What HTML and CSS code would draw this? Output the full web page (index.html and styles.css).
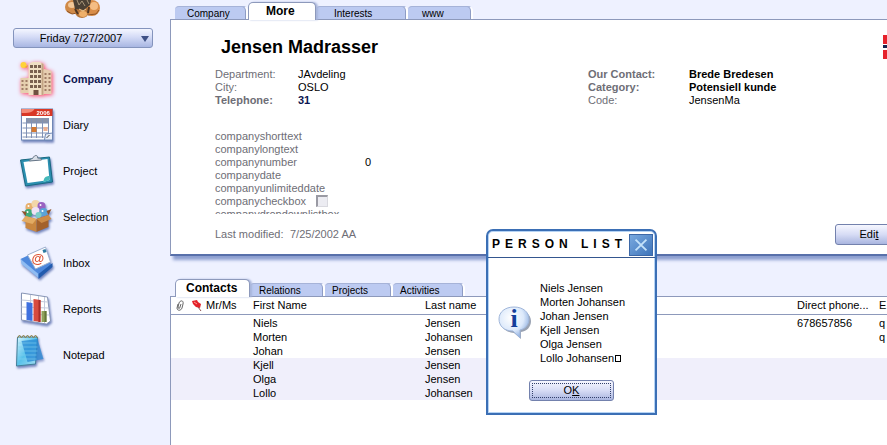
FILE: index.html
```
<!DOCTYPE html>
<html lang="en">
<head>
<meta charset="utf-8">
<title>Jensen Madrasser</title>
<link rel="stylesheet" href="styles.css">
</head>
<body>
<div class="app">
  <aside class="sidebar">
    <svg class="logo" viewBox="0 0 38 18" width="38" height="18" aria-hidden="true">
      <ellipse cx="8" cy="7" rx="7" ry="7" fill="#d08a48"/>
      <ellipse cx="28" cy="8" rx="8" ry="8" fill="#d98d48"/>
      <ellipse cx="8" cy="5" rx="4" ry="3" fill="#f2c898"/>
      <ellipse cx="30" cy="6" rx="4" ry="4" fill="#f5bd84"/>
      <path d="M3 11l5 3 5-1M24 15l8-1 3-4" stroke="#8f5526" stroke-width="1" fill="none"/>
      <ellipse cx="18" cy="12" rx="7" ry="6" fill="#b9773a"/>
      <ellipse cx="19" cy="14" rx="4" ry="3" fill="#efb06a"/>
      <path d="M9 0h18l-1 5-6 5-9-1z" fill="#4a4034"/>
      <path d="M13 0l2 5 3-4 3 5M23 0l2 4" fill="none" stroke="#a89678" stroke-width="1"/>
      <path d="M11 9l3 5M25 7l-1 6" stroke="#503622" stroke-width="2"/>
      <path d="M15 9l4 2 3-2" fill="none" stroke="#e9c690" stroke-width="1"/>
    </svg>
    <label class="date">
      <select class="date-select" aria-label="Date"><option>Friday 7/27/2007</option></select>
    </label>
    <nav class="nav">
      <a class="nav-item active" href="#company">
        <svg class="icon glow" viewBox="0 0 36 36" aria-hidden="true">
          <circle cx="5" cy="4" r="3" fill="#ffd338"/><path d="M6 6l4-2-2 3z" fill="#f0a830"/>
          <path d="M2 17h9v15H2z" fill="#e5cfae"/><path d="M23 10l3-2 7 2v23H23z" fill="#e6cdb0"/>
          <path d="M10 3l4-2h7l4 2v31H10z" fill="#f0dfc4"/><path d="M23 2l2 1v31h-2z" fill="#c3a484"/>
          <g stroke="#7a6050" stroke-width="3" stroke-dasharray="3 2" fill="none">
            <path d="M13 4v24M17 4v24M21 4v24"/></g>
          <g stroke="#a07c66" stroke-width="2" stroke-dasharray="2 2" fill="none">
            <path d="M4 19v11M8 19v11M27 12v18M31 12v18"/></g>
          <path d="M15 29h5v5h-5z" fill="#705040"/>
        </svg><span>Company</span></a>
      <a class="nav-item" href="#diary">
        <svg class="icon" viewBox="0 0 36 36" aria-hidden="true">
          <rect x="3" y="2" width="31" height="31" fill="#fff" stroke="#6f87b5"/>
          <path d="M3 2h31v7H3z" fill="#d93726"/><path d="M3 2h13c-2 4-7 4-13 4z" fill="#f48a78"/>
          <text x="18" y="8" class="year">2006</text>
          <path d="M8 11h22v5H8z" fill="#8b94a9"/>
          <path d="M4 16h26M4 21h26M4 26h26M8 11v20M13 11v20M18 11v20M24 11v20M30 11v18M4 30h22" stroke="#8192b5" fill="none"/>
          <rect x="13" y="20" width="5" height="5" fill="#d5782f"/><rect x="25" y="20" width="4" height="4" fill="#eeb090"/>
          <path d="M26 33l1-6 7-1v7z" fill="#e9eef8" stroke="#6f87b5"/><path d="M28 31l3-3" stroke="#444"/>
        </svg><span>Diary</span></a>
      <a class="nav-item" href="#project">
        <svg class="icon" viewBox="0 0 36 36" aria-hidden="true">
          <path d="M2 7l29-3 3 25-27 4z" fill="#2b8fb0" stroke="#196880"/>
          <path d="M5 9l24-3 2 21-22 3z" fill="#fff"/>
          <path d="M31 27l-5-1-1 3z" fill="#9fe3df"/><path d="M25 29c0-4 2-6 6-6v4z" fill="#44b9ba"/>
          <path d="M11 8c0-3 3-1 4-4 2-3 5-1 4 1 3 0 4 1 4 2z" fill="#d8dee7" stroke="#697687"/>
        </svg><span>Project</span></a>
      <a class="nav-item" href="#selection">
        <svg class="icon" viewBox="0 0 36 36" aria-hidden="true">
          <circle cx="11" cy="8" r="4" fill="#e8b06c"/><circle cx="17" cy="5" r="4" fill="#f3d7a9"/>
          <circle cx="23" cy="7" r="4" fill="#9a62c2"/><circle cx="10" cy="14" r="4" fill="#40aa7a"/>
          <circle cx="17" cy="12" r="4" fill="#efe3f6"/><circle cx="25" cy="13" r="4" fill="#5aa4d8"/>
          <circle cx="20" cy="16" r="3" fill="#7ccfc7"/>
          <g fill="#fff"><circle cx="10" cy="7" r="1"/><circle cx="22" cy="6" r="1"/><circle cx="9" cy="13" r="1"/><circle cx="24" cy="12" r="1"/></g>
          <path d="M7 17l11 3v13L7 29z" fill="#c9873f"/><path d="M18 20l12-4v12l-12 5z" fill="#a3612b"/>
          <path d="M7 17l-4 5 11 3 4-5z" fill="#e2ab63"/><path d="M18 20l5 4 10-4-3-4z" fill="#cc8b46"/>
          <path d="M7 17l-4-5 5 1zM30 16l3-6-5 2z" fill="#8f532a"/>
        </svg><span>Selection</span></a>
      <a class="nav-item" href="#inbox">
        <svg class="icon" viewBox="0 0 36 36" aria-hidden="true">
          <path d="M2 14l15-7 17 13-14 13z" fill="#4d88dc"/><path d="M2 14l18 15v4L3 19z" fill="#8fbcf2"/>
          <path d="M20 29l14-11v4L20 34z" fill="#235cae"/>
          <path d="M9 10L27 2l5 15-15 7z" fill="#fff" stroke="#9db0cf"/>
          <path d="M24 5l3-1 1 3-3 1z" fill="#2c7aa0"/>
          <text x="13" y="18" class="at">@</text>
        </svg><span>Inbox</span></a>
      <a class="nav-item" href="#reports">
        <svg class="icon" viewBox="0 0 36 36" aria-hidden="true">
          <path d="M3 2l26 4 3 24-4 3L3 29z" fill="#fff" stroke="#8795b5"/>
          <path d="M3 9l26 2M3 16l27 1M3 23l28 1M12 4v26M20 5v26M26 6v26" stroke="#c3cadb" fill="none"/>
          <path d="M8 11l6 1v18l-6-1z" fill="#3f71df"/><path d="M15 8l7 1v22l-7-1z" fill="#d74b3f"/>
          <path d="M20 9l2 0v22l-2 0z" fill="#a92c29"/><path d="M23 20l5 0v11h-5z" fill="#91a35c"/><path d="M26 20h2v11h-2z" fill="#637638"/>
        </svg><span>Reports</span></a>
      <a class="nav-item" href="#notepad">
        <svg class="icon notepad" viewBox="0 0 36 36" aria-hidden="true">
          <defs><linearGradient id="note" x2="1" y2="1"><stop stop-color="#d8f6ff"/><stop offset=".5" stop-color="#58c2ea"/><stop offset="1" stop-color="#a8def2"/></linearGradient></defs>
          <path d="M4 4h20l-2 27-19 2z" fill="url(#note)" stroke="#427f99"/>
          <path d="M8 8l16-2 6 20-16 3z" fill="#2788d4" opacity=".75"/>
          <path d="M5 10h18M5 14h19M5 18h19M5 22h18M5 26h18" stroke="#83d0ec" fill="none" opacity=".6"/>
          <path d="M4 5l2-3 2 3 2-3 2 3 2-3 2 3 2-3 2 3 2-3 2 3" stroke="#94864f" fill="none"/>
        </svg><span>Notepad</span></a>
    </nav>
  </aside>

  <main class="main">
    <div class="tabs" role="tablist" aria-label="Company views">
      <button class="tab" role="tab">Company</button>
      <button class="tab selected more" role="tab" aria-selected="true">More</button>
      <button class="tab interests" role="tab">Interests</button>
      <button class="tab www" role="tab">www</button>
    </div>
    <section class="card">
      <div class="card-inner">
        <header class="card-head">
          <h1>Jensen Madrasser</h1>
          <svg class="flag" viewBox="0 0 32 24" role="img" aria-label="Norway">
            <path d="M0 0h32v24H0z" fill="#e6212b"/><path d="M9 0h6v24H9zM0 9h32v6H0z" fill="#fff"/><path d="M11 0h3v24h-3zM0 10h32v3H0z" fill="#17234f"/>
          </svg>
        </header>
        <div class="details">
          <dl class="facts">
            <dt>Department:</dt><dd>JAvdeling</dd>
            <dt>City:</dt><dd>OSLO</dd>
            <dt class="strong">Telephone:</dt><dd class="strong phone">31</dd>
          </dl>
          <dl class="facts wide">
            <dt class="strong">Our Contact:</dt><dd class="strong">Brede Bredesen</dd>
            <dt class="strong">Category:</dt><dd class="strong">Potensiell kunde</dd>
            <dt>Code:</dt><dd>JensenMa</dd>
          </dl>
        </div>
        <div class="custom">
          <div>companyshorttext</div>
          <div>companylongtext</div>
          <div class="pair"><span>companynumber</span><span class="number">0</span></div>
          <div>companydate</div>
          <div>companyunlimiteddate</div>
          <div class="check-row"><label for="cb">companycheckbox</label><input id="cb" type="checkbox"></div>
          <div>companydropdownlistbox</div>
        </div>
        <footer class="card-foot">
          <span class="modified">Last modified:</span><span>7/25/2002 AA</span>
          <button class="btn edit">Edi<u>t</u></button>
        </footer>
      </div>
    </section>

    <div class="tabs lower" role="tablist" aria-label="Company lists">
      <button class="tab selected contacts" role="tab" aria-selected="true">Contacts</button>
      <button class="tab relations" role="tab">Relations</button>
      <button class="tab projects" role="tab">Projects</button>
      <button class="tab activities" role="tab">Activities</button>
    </div>
    <section class="list">
      <table class="people">
        <colgroup><col class="c-clip"><col class="c-pin"><col class="c-title"><col class="c-first"><col><col class="c-phone"><col class="c-mail"></colgroup>
        <thead>
          <tr>
            <th><svg class="clip" viewBox="0 0 10 12" aria-label="Attachment"><path d="M3 4l-1 4c0 3 4 3 5 0l1-4c1-4-3-4-4-1L3 7c0 2 2 2 2 0l1-3" fill="none" stroke="#666"/></svg></th>
            <th><svg class="pin" viewBox="0 0 10 11" aria-label="Pinned"><path d="M0 1l5-1 1 2 3 2-1 4-4-1-3-3z" fill="#e3222a"/><path d="M2 2l3 2" stroke="#ff9a90"/><path d="M6 7l3 4" stroke="#8c5050"/></svg></th>
            <th>Mr/Ms</th><th>First Name</th><th>Last name</th><th>Direct phone...</th><th>E</th>
          </tr>
        </thead>
        <tbody>
          <tr><td></td><td></td><td></td><td>Niels</td><td>Jensen</td><td>678657856</td><td>q</td></tr>
          <tr><td></td><td></td><td></td><td>Morten</td><td>Johansen</td><td></td><td>q</td></tr>
          <tr><td></td><td></td><td></td><td>Johan</td><td>Jensen</td><td></td><td></td></tr>
          <tr class="shade"><td></td><td></td><td></td><td>Kjell</td><td>Jensen</td><td></td><td></td></tr>
          <tr class="shade"><td></td><td></td><td></td><td>Olga</td><td>Jensen</td><td></td><td></td></tr>
          <tr class="shade"><td></td><td></td><td></td><td>Lollo</td><td>Johansen</td><td></td><td></td></tr>
        </tbody>
      </table>
    </section>
  </main>
</div>

<div class="dialog" role="dialog" aria-labelledby="dlg-title">
  <div class="dialog-title">
    <h2 id="dlg-title">PERSON LIST</h2>
    <button class="close" aria-label="Close"><svg viewBox="0 0 24 22" aria-hidden="true"><path d="M6 5l12 12M18 5L6 17" stroke="#c4e2fa" stroke-width="2"/></svg></button>
  </div>
  <div class="dialog-body">
    <svg class="info" viewBox="0 0 34 34" aria-hidden="true">
      <defs><radialGradient id="bubble" cx=".4" cy=".35" r=".7"><stop stop-color="#fff"/><stop offset=".6" stop-color="#dce9fb"/><stop offset="1" stop-color="#86a8dc"/></radialGradient></defs>
      <path d="M17 3c9 0 16 5 16 12 0 6-4 10-10 11v7l-7-6C7 26 2 21 2 14 2 7 8 3 17 3z" fill="#55647e" opacity=".6"/>
      <path d="M16 1c9 0 15 5 15 12 0 6-4 10-9 11v8l-7-7C6 25 1 20 1 13 1 6 7 1 16 1z" fill="url(#bubble)" stroke="#a0b6da"/>
      <text x="16" y="21" class="i">i</text>
    </svg>
    <ul class="names">
      <li>Niels Jensen</li><li>Morten Johansen</li><li>Johan Jensen</li><li>Kjell Jensen</li><li>Olga Jensen</li><li>Lollo Johansen<span class="box"></span></li>
    </ul>
  </div>
  <button class="btn ok"><span>O<u>K</u></span></button>
</div>
</body>
</html>
```
FILE: styles.css
```
* { box-sizing: border-box; }
body {
  margin: 0;
  overflow: hidden;
  background: #eef1ff;
  color: #000;
  font: 11px/13px "Liberation Sans", Arial, sans-serif;
}
button, select { font: inherit; color: inherit; }
h1, h2, dl, dd, ul { margin: 0; padding: 0; }

.app {
  display: grid;
  grid-template-columns: 170px minmax(0, 1fr);
  min-height: 100vh;
}

/* Sidebar */
.sidebar { padding: 0 17px 0 13px; }
.logo { display: block; margin: 0 auto 10px 51px; }
.date { display: block; position: relative; }
.date::after {
  content: "";
  position: absolute;
  right: 4px;
  top: 8px;
  border: 4px solid transparent;
  border-top: 6px solid #3f5186;
  border-bottom: 0;
  pointer-events: none;
}
.date-select {
  display: block;
  width: 100%;
  height: 20px;
  padding: 0 4px 0 0;
  appearance: none;
  border: 1px solid #8494bd;
  border-radius: 3px;
  background: linear-gradient(#f4f6ff, #d4dbf6 45%, #a8b6e2);
  text-align-last: center;
}
.nav { margin-top: 8px; }
.nav-item {
  display: flex;
  align-items: center;
  gap: 8px;
  height: 46px;
  padding-left: 5px;
  color: #000;
  text-decoration: none;
}
.nav-item.active { color: #0b1450; font-weight: bold; }
.icon { width: 37px; height: 36px; filter: drop-shadow(1px 2px 1px #7284bc); }
.icon.glow { filter: drop-shadow(1px 1px 2px #ff4060); }
.notepad { margin: -8px 5px 0 -5px; }
.year { font: bold 6px "Liberation Sans", sans-serif; fill: #fff; }
.at { font: bold 13px "Liberation Sans", sans-serif; fill: #dc5535; }

/* Tabs */
.main { display: flex; flex-direction: column; overflow: hidden; }
.tabs { display: flex; align-items: flex-end; height: 19px; padding-left: 5px; }
.tab {
  height: 13px;
  width: 73px;
  padding: 0 0 0 12px;
  border: 0;
  border-top: 1px solid #a6b3d8;
  border-right: 2px solid #fff;
  border-radius: 4px 5px 0 0;
  background: #bccaf1;
  box-shadow: inset -1px 0 #8e9cc4;
  font-size: 10px;
  line-height: 13px;
  text-align: left;
}
.tab.selected {
  position: relative;
  z-index: 1;
  height: 18px;
  margin-bottom: -1px;
  border: 1px solid #8d99bb;
  border-bottom: 0;
  border-radius: 5px 5px 0 0;
  background: #fff;
  box-shadow: 2px 0 2px #a9b6db;
  font-size: 12px;
  font-weight: bold;
  line-height: 17px;
}
.more { width: 68px; padding-left: 17px; }
.interests { width: 92px; padding-left: 18px; }
.www { width: 65px; padding-left: 14px; }
.contacts { width: 75px; padding-left: 10px; }
.relations { width: 75px; padding-left: 9px; }
.projects { width: 68px; padding-left: 7px; }
.activities { width: 72px; padding-left: 7px; }
.lower { height: 18px; margin-top: 22px; }

/* Company card */
.card {
  border: 1px solid #8d99bb;
  border-right: 0;
  border-bottom: 2px solid #5870aa;
  background: #fff;
  box-shadow: 3px 4px 3px #8d9fd0;
}
.card-inner { width: calc(100% + 30px); padding: 15px 0 9px 44px; }
.card-head { display: flex; justify-content: space-between; align-items: center; height: 24px; padding: 0 2px 0 6px; }
.card-head h1 { font-size: 18px; line-height: 22px; }
.flag { width: 32px; height: 24px; }
.details { display: grid; grid-template-columns: 373px 1fr; margin-top: 9px; }
.facts { display: grid; grid-template-columns: 83px 1fr; align-content: start; }
.facts.wide { grid-template-columns: 101px 1fr; }
dt, .custom, .card-foot { color: #6e6e76; }
.strong { font-weight: bold; }
.phone { color: #0b1450; }
.custom { height: 84px; margin-top: 23px; overflow: hidden; }
.pair { display: grid; grid-template-columns: 150px 1fr; }
.number { color: #000; }
.check-row { display: flex; gap: 10px; height: 13px; }
.check-row input {
  width: 12px;
  height: 12px;
  margin: 0;
  appearance: none;
  border: 1px solid #d9d9df;
  border-top: 2px solid #9a9aa3;
  border-left: 2px solid #9a9aa3;
  background: #ececf2;
}
.card-foot { display: flex; align-items: center; margin-top: 10px; }
.modified { width: 75px; }
.btn {
  height: 21px;
  padding: 0;
  border: 1px solid #7381ad;
  border-radius: 3px;
  background: linear-gradient(#f6f7ff, #d7dcf5 50%, #a9b5df);
  color: #000;
}
.edit { width: 68px; margin-left: auto; margin-right: 14px; }

/* Contact list */
.list { flex: 1; border-top: 1px solid #8d99bb; border-left: 1px solid #8d99bb; background: #fff; }
.people { width: calc(100% + 51px); table-layout: fixed; border-collapse: separate; border-spacing: 0; }
.people th {
  height: 18px;
  padding: 0 0 0 1px;
  border-bottom: 1px solid #8d99bb;
  font-weight: normal;
  text-align: left;
  white-space: nowrap;
}
.people td { height: 14px; padding: 0 0 0 1px; }
.people tbody::before { content: ""; display: block; height: 1px; }
.shade { background: #f0effb; }
.c-clip { width: 20px; }
.c-pin { width: 14px; }
.c-title { width: 47px; }
.c-first { width: 172px; }
.c-phone { width: 82px; }
.c-mail { width: 60px; }
.clip { display: block; width: 10px; height: 12px; margin-left: 3px; }
.pin { display: block; width: 10px; height: 11px; }

/* Message box */
.dialog {
  position: absolute;
  left: 486px;
  top: 229px;
  width: 171px;
  padding-bottom: 12px;
  border: 2px solid #3b6fb5;
  border-radius: 7px 7px 0 0;
  background: #fff;
  box-shadow: inset 0 0 0 1px #b5d3f4;
}
.dialog-title {
  display: flex;
  align-items: center;
  justify-content: space-between;
  height: 27px;
  padding: 1px 2px 0 4px;
  border-bottom: 1px solid #34568f;
}
.dialog-title h2 { width: 137px; font-size: 12px; letter-spacing: 5px; white-space: nowrap; }
.close {
  flex: none;
  width: 24px;
  height: 22px;
  padding: 0;
  border: 1px solid #3d68a7;
  background: linear-gradient(135deg, #79a9df, #3e74ba);
}
.close svg { display: block; width: 22px; height: 20px; }
.dialog-body { display: flex; align-items: center; gap: 8px; padding: 23px 0 15px 10px; }
.info { width: 34px; height: 34px; }
.i { font: bold 26px "Liberation Serif", serif; fill: #153f9b; text-anchor: middle; }
.names { list-style: none; line-height: 14px; white-space: nowrap; }
.box { display: inline-block; width: 6px; height: 7px; margin-left: 1px; border: 1px solid #000; }
.ok { display: block; width: 85px; margin-left: 41px; padding: 2px; }
.ok span { display: block; border: 1px dotted #33406b; line-height: 13px; }
```
